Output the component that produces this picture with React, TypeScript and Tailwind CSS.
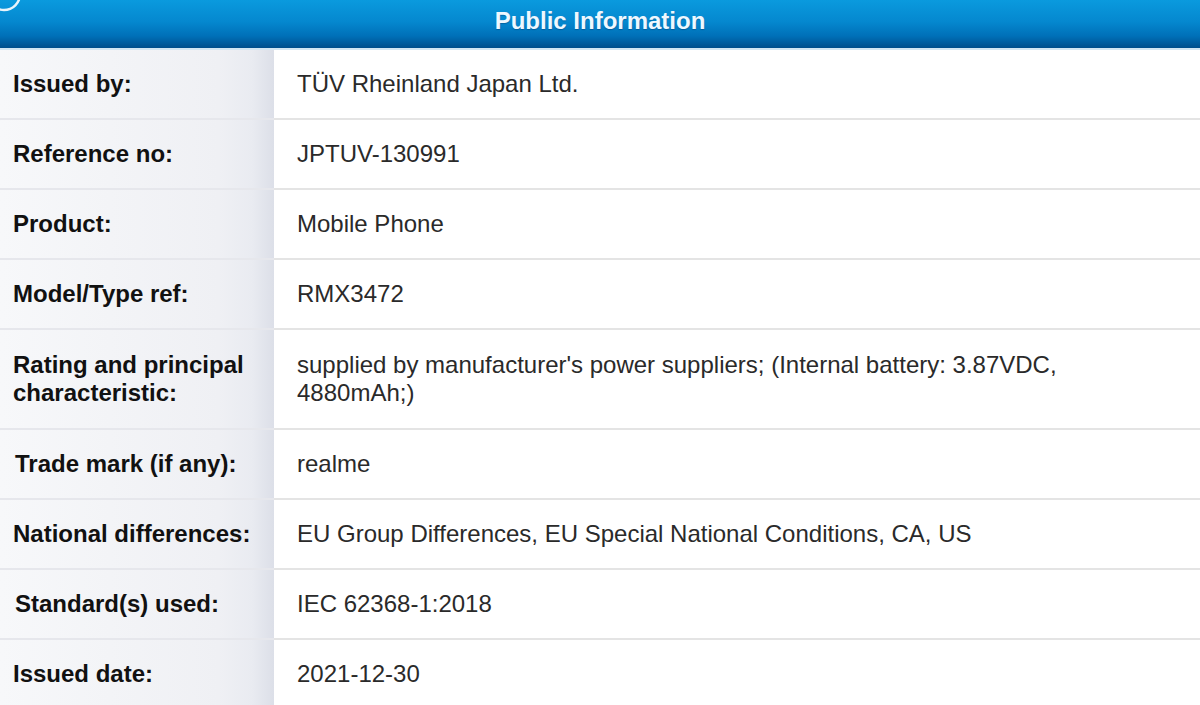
import React from 'react';

const rows: { label: string; value: string; tall?: boolean; indent?: boolean }[] = [
  { label: 'Issued by:', value: 'TÜV Rheinland Japan Ltd.' },
  { label: 'Reference no:', value: 'JPTUV-130991' },
  { label: 'Product:', value: 'Mobile Phone' },
  { label: 'Model/Type ref:', value: 'RMX3472' },
  {
    label: 'Rating and principal characteristic:',
    value: "supplied by manufacturer's power suppliers; (Internal battery: 3.87VDC, 4880mAh;)",
    tall: true,
  },
  { label: 'Trade mark (if any):', value: 'realme', indent: true },
  { label: 'National differences:', value: 'EU Group Differences, EU Special National Conditions, CA, US' },
  { label: 'Standard(s) used:', value: 'IEC 62368-1:2018', indent: true },
  { label: 'Issued date:', value: '2021-12-30' },
];

const App: React.FC = () => {
  return (
    <div className="w-[1200px] h-[705px] overflow-hidden bg-white font-['Liberation_Sans',Arial,sans-serif]">
      <div className="relative h-[50px] border-b-2 border-[#d3e6f3] bg-[linear-gradient(to_bottom,#0a9ade_0%,#0588cf_45%,#0070b8_75%,#004e8c_100%)] flex items-center justify-center">
        <svg className="absolute left-0 top-0" width="24" height="20" viewBox="0 0 24 20">
          <circle cx="4" cy="-6" r="16" fill="none" stroke="#e8f4fb" strokeWidth="2.5" />
        </svg>
        <h1 className="text-[24px] font-bold text-[#eef8ff] leading-none pb-[6px] [text-shadow:0_1px_1px_rgba(0,40,90,0.35)]">
          Public Information
        </h1>
      </div>
      <div className="flex flex-col">
        {rows.map((row) => (
          <div key={row.label} className={`flex ${row.tall ? 'h-[100px]' : 'h-[70px]'}`}>
            <div
              className={`w-[274px] shrink-0 flex items-center ${row.indent ? 'pl-[15px]' : 'pl-[13px]'} pr-[20px] border-b-2 border-[#e6e7ec] bg-[linear-gradient(to_right,#f7f8fa_0%,#eff0f4_80%,#e9ebf1_92%,#dcdfe8_100%)]`}
            >
              <span className="text-[24px] leading-[28px] font-bold text-[#111]">{row.label}</span>
            </div>
            <div className="flex-1 flex items-center pl-[23px] pr-[24px] border-b-2 border-[#e4e4e4]">
              <span className="text-[24px] leading-[28px] text-[#2a2a2a]">{row.value}</span>
            </div>
          </div>
        ))}
      </div>
    </div>
  );
};

export default App;
